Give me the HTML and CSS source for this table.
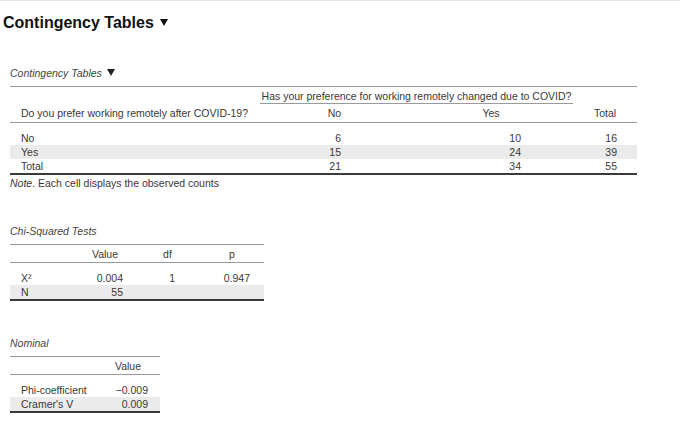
FILE: index.html
```html
<!DOCTYPE html>
<html>
<head>
<meta charset="utf-8">
<link rel="stylesheet" href="styles.css">
</head>
<body>
<h1 class="heading">Contingency Tables <svg class="tri-lg" width="8" height="7" viewBox="0 0 8 7"><polygon points="0,0 8,0 4,7" fill="#111"/></svg></h1>

<div class="section">
  <div class="title first">Contingency Tables <svg class="tri-sm" width="8" height="7" viewBox="0 0 8 7"><polygon points="0,0 8,0 4,7" fill="#222"/></svg></div>
  <table class="res main">
    <colgroup><col class="w250"><col class="w149"><col class="w164"><col class="w64"></colgroup>
    <thead>
      <tr class="super">
        <th></th>
        <th colspan="2"><div class="span-head">Has your preference for working remotely changed due to COVID?</div></th>
        <th></th>
      </tr>
      <tr class="head">
        <th class="lab">Do you prefer working remotely after COVID-19?</th>
        <th>No</th>
        <th>Yes</th>
        <th>Total</th>
      </tr>
    </thead>
    <tbody>
      <tr class="first-row"><td class="lab">No</td><td class="num p68">6</td><td class="num p52">10</td><td class="num p20">16</td></tr>
      <tr class="alt"><td class="lab">Yes</td><td class="num p68">15</td><td class="num p52">24</td><td class="num p20">39</td></tr>
      <tr class="last-row"><td class="lab">Total</td><td class="num p68">21</td><td class="num p52">34</td><td class="num p20">55</td></tr>
    </tbody>
  </table>
  <div class="note"><i>Note</i>. Each cell displays the observed counts</div>

  <div class="title">Chi-Squared Tests</div>
  <table class="res chi">
    <colgroup><col class="w65"><col class="w60"><col class="w65"><col class="w64"></colgroup>
    <thead>
      <tr class="head"><th></th><th>Value</th><th>df</th><th>p</th></tr>
    </thead>
    <tbody>
      <tr class="first-row"><td class="lab">X²</td><td class="num p12">0.004</td><td class="num p25">1</td><td class="num p14">0.947</td></tr>
      <tr class="alt last-row"><td class="lab">N</td><td class="num p12">55</td><td class="num"></td><td class="num"></td></tr>
    </tbody>
  </table>

  <div class="title nom-title">Nominal</div>
  <table class="res nom">
    <colgroup><col class="w86"><col class="w64"></colgroup>
    <thead>
      <tr class="head"><th></th><th>Value</th></tr>
    </thead>
    <tbody>
      <tr class="first-row"><td class="lab">Phi-coefficient</td><td class="num p12">−0.009</td></tr>
      <tr class="alt last-row"><td class="lab">Cramer's V</td><td class="num p12">0.009</td></tr>
    </tbody>
  </table>
</div>
</body>
</html>
```

FILE: styles.css
```css
html, body {
  margin: 0;
  padding: 0;
  background: #fff;
}
body {
  border-top: 1px solid #e2e2e2;
  font-family: "Liberation Sans", Arial, sans-serif;
  color: #333;
}
.heading {
  margin: 0;
  padding: 13px 0 0 3px;
  font-size: 16px;
  line-height: 18px;
  font-weight: bold;
  color: #111;
}
.tri-lg {
  display: inline-block;
  vertical-align: 2px;
  margin-left: 2px;
}
.tri-sm {
  display: inline-block;
  vertical-align: 1px;
  margin-left: 2px;
}
.section {
  padding-left: 10px;
}
.title {
  font-size: 10.5px;
  line-height: 14px;
  font-style: italic;
  color: #444;
  margin-top: 34px;
  margin-bottom: 6px;
}
.title.nom-title {
  margin-top: 35px;
}
.res {
  border-collapse: separate;
  border-spacing: 0;
  table-layout: fixed;
  border-top: 1px solid #9a9a9a;
  font-size: 10.5px;
  line-height: 14px;
  color: #383838;
}
.main { width: 627px; }
.chi { width: 254px; }
.nom { width: 150px; }
.w250 { width: 250px; }
.w149 { width: 149px; }
.w164 { width: 164px; }
.w64 { width: 64px; }
.w65 { width: 65px; }
.w60 { width: 60px; }
.w86 { width: 86px; }
th, td {
  padding: 0;
  white-space: nowrap;
}
th {
  font-weight: normal;
  text-align: center;
}
.super th {
  padding-top: 2px;
  vertical-align: top;
}
.span-head {
  border-bottom: 1px solid #9a9a9a;
  text-align: center;
}
.super th:first-child, .super th:last-child {
  height: 15px;
}
.main .head th {
  padding: 2px 0 2px 0;
  border-bottom: 1px solid #9a9a9a;
}
.chi .head th, .nom .head th {
  padding: 2px 0 1px 0;
  border-bottom: 1px solid #9a9a9a;
}
.head th.lab {
  text-align: left;
  padding-left: 11px;
}
td.lab {
  text-align: left;
  padding-left: 11px;
}
.num { text-align: right; }
.p68 { padding-right: 68px; }
.p52 { padding-right: 52px; }
.p20 { padding-right: 20px; }
.p12 { padding-right: 12px; }
.p25 { padding-right: 25px; }
.p14 { padding-right: 14px; }
.first-row td {
  padding-top: 8px;
}
.alt td {
  background: #ebebeb;
}
.last-row td {
  border-bottom: 2px solid #3a3a3a;
}
.note {
  margin-top: 1px;
  font-size: 10.5px;
  line-height: 14px;
  color: #383838;
}
```
